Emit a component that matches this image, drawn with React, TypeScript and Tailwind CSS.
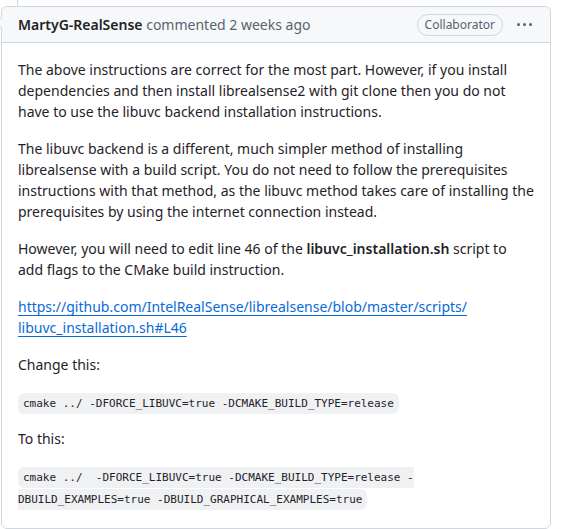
const sans = "font-['Noto_Sans',_'Open_Sans',_sans-serif]";
const mono = "font-['DejaVu_Sans_Mono',_'Liberation_Mono',_monospace]";

function InlineCode({ children }: { children: React.ReactNode }) {
  return (
    <code
      className={`${mono} rounded-md bg-[#eff1f3] px-[5px] py-[4px] text-[11px] leading-none text-[#1f2328] [box-decoration-break:slice]`}
    >
      {children}
    </code>
  );
}

export default function App() {
  return (
    <div className={`${sans} min-h-[529px] bg-white text-[14px] text-[#1f2328]`}>
      {/* timeline line above */}
      <div className="ml-[17px] h-[6px] w-px bg-[#d0d7de]" />

      <div className="relative ml-px mr-[10px] rounded-md border border-[#d0d7de]">
        {/* caret pointing to avatar */}
        <div className="absolute -left-[5px] top-[12px] size-[8px] rotate-45 border-b border-l border-[#d0d7de] bg-[#f6f8fa]" />

        <div className="flex h-[36px] items-center justify-between rounded-t-md border-b border-[#d0d7de] bg-[#f6f8fa] pl-4 pr-[18px]">
          <div className="leading-none">
            <span className="font-semibold text-[#1f2328]">MartyG-RealSense</span>{" "}
            <span className="text-[#59636e]">commented 2 weeks ago</span>
          </div>
          <div className="flex items-center gap-[14px]">
            <span className="rounded-full border border-[#d0d7de] px-[7px] py-px text-[12px] leading-[18px] text-[#59636e]">
              Collaborator
            </span>
            <span className="flex gap-[3px]">
              <span className="size-[3px] rounded-full bg-[#59636e]" />
              <span className="size-[3px] rounded-full bg-[#59636e]" />
              <span className="size-[3px] rounded-full bg-[#59636e]" />
            </span>
          </div>
        </div>

        <div className="space-y-4 px-4 pb-[19px] pt-4 leading-[21px]">
          <p>
            The above instructions are correct for the most part. However, if you install
            dependencies and then install librealsense2 with git clone then you do not
            have to use the libuvc backend installation instructions.
          </p>
          <p>
            The libuvc backend is a different, much simpler method of installing
            librealsense with a build script. You do not need to follow the prerequisites
            instructions with that method, as the libuvc method takes care of installing the
            prerequisites by using the internet connection instead.
          </p>
          <p>
            However, you will need to edit line 46 of the{" "}
            <strong className="font-semibold">libuvc_installation.sh</strong> script to
            add flags to the CMake build instruction.
          </p>
          <p>
            <a
              href="#"
              className="text-[#0969da] underline decoration-[#0969da] underline-offset-[3px]"
            >
              https://github.com/IntelRealSense/librealsense/blob/master/scripts/
              <wbr />
              libuvc_installation.sh#L46
            </a>
          </p>
          <p>Change this:</p>
          <p>
            <InlineCode>cmake ../ -DFORCE_LIBUVC=true -DCMAKE_BUILD_TYPE=release</InlineCode>
          </p>
          <p>To this:</p>
          <p className="pr-[110px] leading-[22px]">
            <InlineCode>
              cmake ../&nbsp; -DFORCE_LIBUVC=true -DCMAKE_BUILD_TYPE=release
              -DBUILD_EXAMPLES=true -DBUILD_GRAPHICAL_EXAMPLES=true
            </InlineCode>
          </p>
        </div>
      </div>

      <div className="ml-[17px] h-[8px] w-px bg-[#d0d7de]" />
    </div>
  );
}
